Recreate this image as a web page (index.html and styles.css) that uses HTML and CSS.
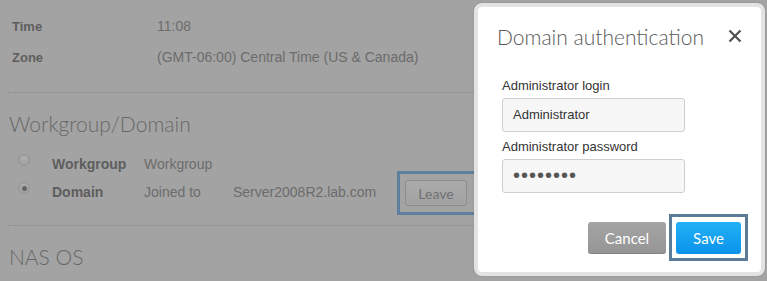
FILE: index.html
```html
<!DOCTYPE html>
<html>
<head>
<meta charset="utf-8">
<link rel="stylesheet" href="styles.css">
</head>
<body>
<div class="page">
  <div class="info">
    <div class="info-row"><span class="info-label">Time</span><span class="info-value">11:08</span></div>
    <div class="info-row"><span class="info-label">Zone</span><span class="info-value">(GMT-06:00) Central Time (US &amp; Canada)</span></div>
  </div>
  <div class="sep"></div>
  <h2 class="section-title">Workgroup/Domain</h2>
  <div class="choices">
    <div class="choice">
      <span class="radio"></span>
      <span class="choice-label">Workgroup</span>
      <span class="choice-value">Workgroup</span>
    </div>
    <div class="choice">
      <span class="radio checked"></span>
      <span class="choice-label">Domain</span>
      <span class="choice-value">Joined to</span>
      <span class="choice-server">Server2008R2.lab.com</span>
      <span class="leave-wrap"><button class="btn-leave">Leave</button></span>
    </div>
  </div>
  <div class="sep sep-2"></div>
  <h2 class="section-title">NAS OS</h2>
</div>

<div class="modal">
  <div class="modal-head">
    <h3 class="modal-title">Domain authentication</h3>
    <span class="modal-close">
      <svg width="14" height="14" viewBox="0 0 14 14"><path d="M1.5 1.5 L12.5 12.5 M12.5 1.5 L1.5 12.5" stroke="#505050" stroke-width="2.2" stroke-linecap="butt"/></svg>
    </span>
  </div>
  <div class="modal-form">
    <div class="field-label">Administrator login</div>
    <div class="field">Administrator</div>
    <div class="field-label field-label-2">Administrator password</div>
    <div class="field field-pass">••••••••</div>
  </div>
  <div class="modal-actions">
    <button class="btn btn-cancel">Cancel</button>
    <span class="save-wrap"><button class="btn btn-save">Save</button></span>
  </div>
</div>
</body>
</html>
```

FILE: styles.css
```css
html, body {
  margin: 0;
  padding: 0;
}
body {
  background: #a3a3a3;
  font-family: "Liberation Sans", Arial, sans-serif;
  width: 767px;
  height: 281px;
  overflow: hidden;
  position: relative;
}
.page {
  padding-left: 8px;
  box-sizing: border-box;
  width: 482px;
}
.info {
  padding: 11px 0 0 4px;
}
.info-row {
  display: grid;
  grid-template-columns: 145px 1fr;
  line-height: 31px;
  height: 31px;
}
.info-label {
  font-size: 13px;
  font-weight: bold;
  color: #5e5e5e;
}
.info-value {
  font-size: 14px;
  color: #6c6c6c;
}
.sep {
  margin-top: 19px;
  border-top: 1px dotted #8a8a8a;
  height: 0;
}
.sep-2 {
  margin-top: 19px;
}
.section-title {
  margin: 19px 0 0 1px;
  font-family: Lato, "Liberation Sans", sans-serif;
  font-weight: 300;
  font-size: 21px;
  line-height: 24px;
  color: #686868;
}
.choices {
  margin-top: 14px;
  padding-left: 10px;
}
.choice {
  display: grid;
  grid-template-columns: 34px 92px 89px 172px auto;
  align-items: center;
  height: 28px;
  line-height: 28px;
  font-size: 14px;
}
.radio {
  width: 12px;
  height: 12px;
  box-sizing: border-box;
  border-radius: 50%;
  border: 1px solid #939393;
  background: radial-gradient(circle at 50% 35%, #b0b0b0, #9c9c9c);
  position: relative;
  top: -4px;
}
.radio.checked::after {
  content: "";
  position: absolute;
  left: 2.5px;
  top: 2.5px;
  width: 5px;
  height: 5px;
  border-radius: 50%;
  background: #636363;
}
.choice-label {
  font-weight: bold;
  color: #5e5e5e;
}
.choice-value, .choice-server {
  color: #6c6c6c;
}
.leave-wrap {
  position: relative;
  display: inline-block;
  height: 26px;
  top: 1px;
}
.leave-wrap::after {
  content: "";
  position: absolute;
  left: -8px;
  right: -10px;
  top: -9px;
  bottom: -9px;
  border: 3px solid #5f7f9e;
  pointer-events: none;
}
.btn-leave {
  display: block;
  width: 62px;
  height: 26px;
  padding: 0;
  border: 1px solid #8c8c8c;
  border-radius: 3px;
  background: linear-gradient(#ababab, #a2a2a2);
  font-family: Lato, "Liberation Sans", sans-serif;
  font-size: 14px;
  color: #707070;
}

/* modal */
.modal {
  position: absolute;
  left: 474px;
  top: 3px;
  width: 291px;
  height: 273px;
  box-sizing: border-box;
  border: 4px solid #e3e3e3;
  border-radius: 8px;
  background: #fff;
  box-shadow: 0 0 2px rgba(0,0,0,0.15);
}
.modal-head {
  display: flex;
  align-items: center;
  justify-content: space-between;
  padding: 18px 19px 0 19px;
}
.modal-title {
  margin: 0;
  font-family: Lato, "Liberation Sans", sans-serif;
  font-weight: 300;
  font-size: 21px;
  line-height: 24px;
  color: #5a5a5a;
}
.modal-close {
  display: flex;
  width: 14px;
  height: 14px;
  margin-top: -2px;
}
.modal-form {
  padding: 29px 0 0 24px;
}
.field-label {
  font-size: 13px;
  line-height: 16px;
  color: #333;
  margin-bottom: 4px;
}
.field-label-2 {
  margin-top: 7px;
  margin-bottom: 4px;
}
.field {
  width: 183px;
  height: 34px;
  box-sizing: border-box;
  border: 1px solid #cfcfcf;
  border-radius: 3px;
  background: #f7f7f7;
  padding-left: 10px;
  font-size: 13px;
  line-height: 32px;
  color: #333;
}
.field-pass {
  font-size: 20px;
  letter-spacing: 1px;
  color: #555;
  line-height: 31px;
}
.modal-actions {
  display: flex;
  justify-content: flex-end;
  gap: 10px;
  padding: 29px 20px 0 0;
}
.btn {
  height: 32px;
  border: none;
  border-radius: 3px;
  font-family: Lato, "Liberation Sans", sans-serif;
  font-size: 15px;
  color: #fff;
  padding: 0;
}
.btn-cancel {
  width: 78px;
  background: linear-gradient(#a4a4a4, #959595);
  box-shadow: inset 0 -1px 0 rgba(0,0,0,0.12);
}
.save-wrap {
  position: relative;
  display: inline-block;
  height: 32px;
}
.save-wrap::after {
  content: "";
  position: absolute;
  left: -7px;
  right: -7px;
  top: -8px;
  bottom: -7px;
  border: 3px solid #5b7b98;
  pointer-events: none;
}
.btn-save {
  display: block;
  width: 65px;
  background: linear-gradient(#22b1f6, #0a92ea);
}
```
